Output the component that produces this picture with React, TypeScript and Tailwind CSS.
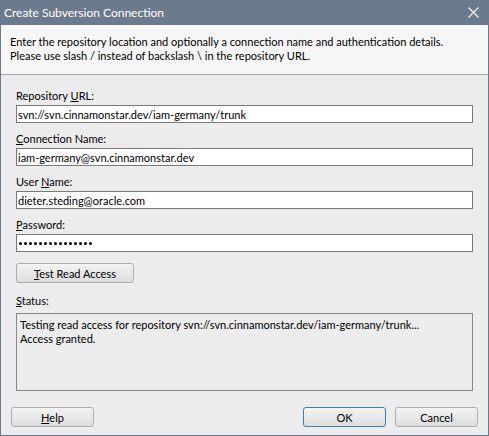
import React from "react";

const font = { fontFamily: 'Lato, "Noto Sans", sans-serif' };

function Btn({ children, w, def }: { children: React.ReactNode; w: string; def?: boolean }) {
  return (
    <div
      className={`${w} h-[20px] rounded-[3px] border ${def ? "border-[#3c7fb1]" : "border-[#acacac]"} bg-gradient-to-b from-[#f4f4f4] to-[#dddddd] flex items-center justify-center text-[11px] text-black leading-none`}
    >
      {children}
    </div>
  );
}

function Field({ label, children }: { label: React.ReactNode; children: React.ReactNode }) {
  return (
    <div className="flex flex-col">
      <div className="h-[15px] leading-[15px] text-[11px] text-black">{label}</div>
      <div className="mt-[2px] h-[18px] border border-[#7a7a7a] bg-white pl-[1px] flex items-center text-[11px] text-black leading-none whitespace-nowrap">
        {children}
      </div>
    </div>
  );
}

export default function App() {
  const dots = Array.from({ length: 15 });
  return (
    <div style={font} className="w-[489px] h-[436px] bg-[#ececec] border-x border-b border-[#6b7a8c] flex flex-col">
      <div className="h-[25px] bg-[#6b7a8c] flex items-center justify-between pl-[4px] pr-[10px] text-white text-[12px] -mx-px">
        <span>Create Subversion Connection</span>
        <svg width="11" height="11" viewBox="0 0 11 11">
          <path d="M0.5 0.5 L10.5 10.5 M10.5 0.5 L0.5 10.5" stroke="white" strokeWidth="1.1" />
        </svg>
      </div>
      <div className="h-[50px] bg-[#f6f6f6] border-b border-[#a9a9a3] pl-[9px] pt-[10px] text-[11px] leading-[14px] text-black whitespace-nowrap">
        <div>Enter the repository location and optionally a connection name and authentication details.</div>
        <div>Please use slash / instead of backslash \ in the repository URL.</div>
      </div>
      <div className="px-[15px] pt-[13px] flex flex-col">
        <div className="flex flex-col gap-[8px]">
          <Field label={<>Repository <u>U</u>RL:</>}>svn://svn.cinnamonstar.dev/iam-germany/trunk</Field>
          <Field label={<><u>C</u>onnection Name:</>}>iam-germany@svn.cinnamonstar.dev</Field>
          <Field label={<>User <u>N</u>ame:</>}>dieter.steding@oracle.com</Field>
          <Field label={<><u>P</u>assword:</>}>
            <div className="flex gap-[2px] pl-[1px]">
              {dots.map((_, i) => (
                <span key={i} className="w-[3px] h-[3px] rounded-full bg-black" />
              ))}
            </div>
          </Field>
        </div>
        <div className="mt-[11px]">
          <Btn w="w-[118px]"><span><u>T</u>est Read Access</span></Btn>
        </div>
        <div className="mt-[10px] h-[15px] leading-[15px] text-[11px] text-black">
          <u>S</u>tatus:
        </div>
        <div className="mt-[5px] h-[78px] border border-[#8a8a8a] bg-[#ececec] pl-[3px] pt-[4px] text-[11px] leading-[14px] text-black whitespace-nowrap">
          <div>Testing read access for repository svn://svn.cinnamonstar.dev/iam-germany/trunk...</div>
          <div>Access granted.</div>
        </div>
      </div>
      <div className="mt-[16px] pl-[10px] pr-[10px] flex items-center justify-between">
        <Btn w="w-[83px]"><span><u>H</u>elp</span></Btn>
        <div className="flex gap-[9px]">
          <Btn w="w-[83px]" def>OK</Btn>
          <Btn w="w-[83px]">Cancel</Btn>
        </div>
      </div>
    </div>
  );
}
